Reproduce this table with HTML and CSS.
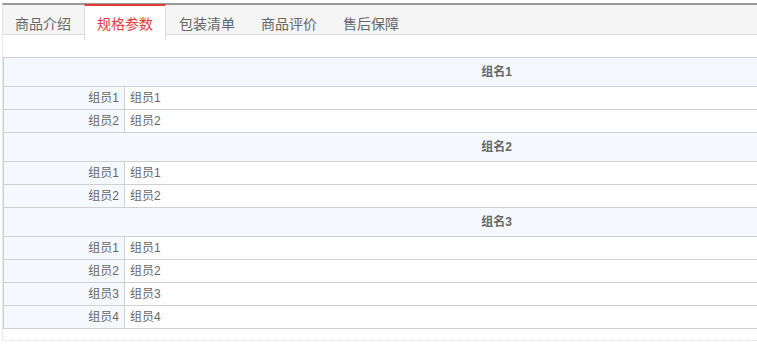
FILE: index.html
```html
<!DOCTYPE html>
<html lang="zh-CN">
<head>
<meta charset="utf-8">
<title>规格参数</title>
<link rel="stylesheet" href="styles.css">
</head>
<body>
<div class="detail">
  <div class="tabbar">
    <ul class="tabs">
      <li class="tab">商品介绍</li>
      <li class="tab active">规格参数</li>
      <li class="tab">包装清单</li>
      <li class="tab">商品评价</li>
      <li class="tab">售后保障</li>
    </ul>
  </div>
  <div class="content">
    <table class="spec">
      <tbody>
        <tr class="group"><th colspan="2">组名1</th></tr>
        <tr><td class="key">组员1</td><td class="val">组员1</td></tr>
        <tr><td class="key">组员2</td><td class="val">组员2</td></tr>
        <tr class="group"><th colspan="2">组名2</th></tr>
        <tr><td class="key">组员1</td><td class="val">组员1</td></tr>
        <tr><td class="key">组员2</td><td class="val">组员2</td></tr>
        <tr class="group"><th colspan="2">组名3</th></tr>
        <tr><td class="key">组员1</td><td class="val">组员1</td></tr>
        <tr><td class="key">组员2</td><td class="val">组员2</td></tr>
        <tr><td class="key">组员3</td><td class="val">组员3</td></tr>
        <tr><td class="key">组员4</td><td class="val">组员4</td></tr>
      </tbody>
    </table>
  </div>
</div>
</body>
</html>
```

FILE: styles.css
```css
html, body {
  margin: 0;
  padding: 0;
  overflow: hidden;
  background: #fff;
}
body {
  font-family: Arial, "Liberation Sans", "Noto Sans CJK SC", sans-serif;
  font-size: 12px;
  color: #666;
}
.detail {
  width: 988px;
  margin: 3px 0 0 2px;
  border-top: 2px solid #999;
  border-left: 1px solid #e6e6e6;
  border-bottom: 1px dotted #ddd;
}
.tabbar {
  height: 29px;
  background: #f5f5f5;
  border-bottom: 1px solid #ddd;
}
.tabs {
  display: flex;
  align-items: flex-start;
  margin: 0 0 0 -1px;
  padding: 0;
  list-style: none;
}
.tab {
  position: relative;
  box-sizing: border-box;
  height: 36px;
  margin-top: -1px;
  padding: 8px 12px 0;
  border: 1px solid transparent;
  border-top: 2px solid transparent;
  border-bottom: 0;
  font-size: 14px;
  line-height: 20px;
  color: #666;
  white-space: nowrap;
}
.tab.active {
  background: #fff;
  border-color: #ddd;
  border-top-color: #e4393c;
  color: #e4393c;
}
.content {
  padding: 22px 0 11px;
}
.spec {
  width: 987px;
  border-collapse: collapse;
  border: 1px solid #ccc;
}
.spec th,
.spec td {
  border: 1px solid #d0d0d0;
  padding: 0;
  font-weight: normal;
}
.group th {
  height: 28px;
  line-height: 28px;
  background: #f5f9fd;
  text-align: center;
  font-weight: bold;
  color: #666;
}
.key {
  width: 115px;
  height: 22px;
  line-height: 22px;
  padding: 0 5px 0 0 !important;
  background: #f5f9fd;
  text-align: right;
}
.val {
  height: 22px;
  line-height: 22px;
  padding: 0 0 0 5px !important;
  text-align: left;
}
```
